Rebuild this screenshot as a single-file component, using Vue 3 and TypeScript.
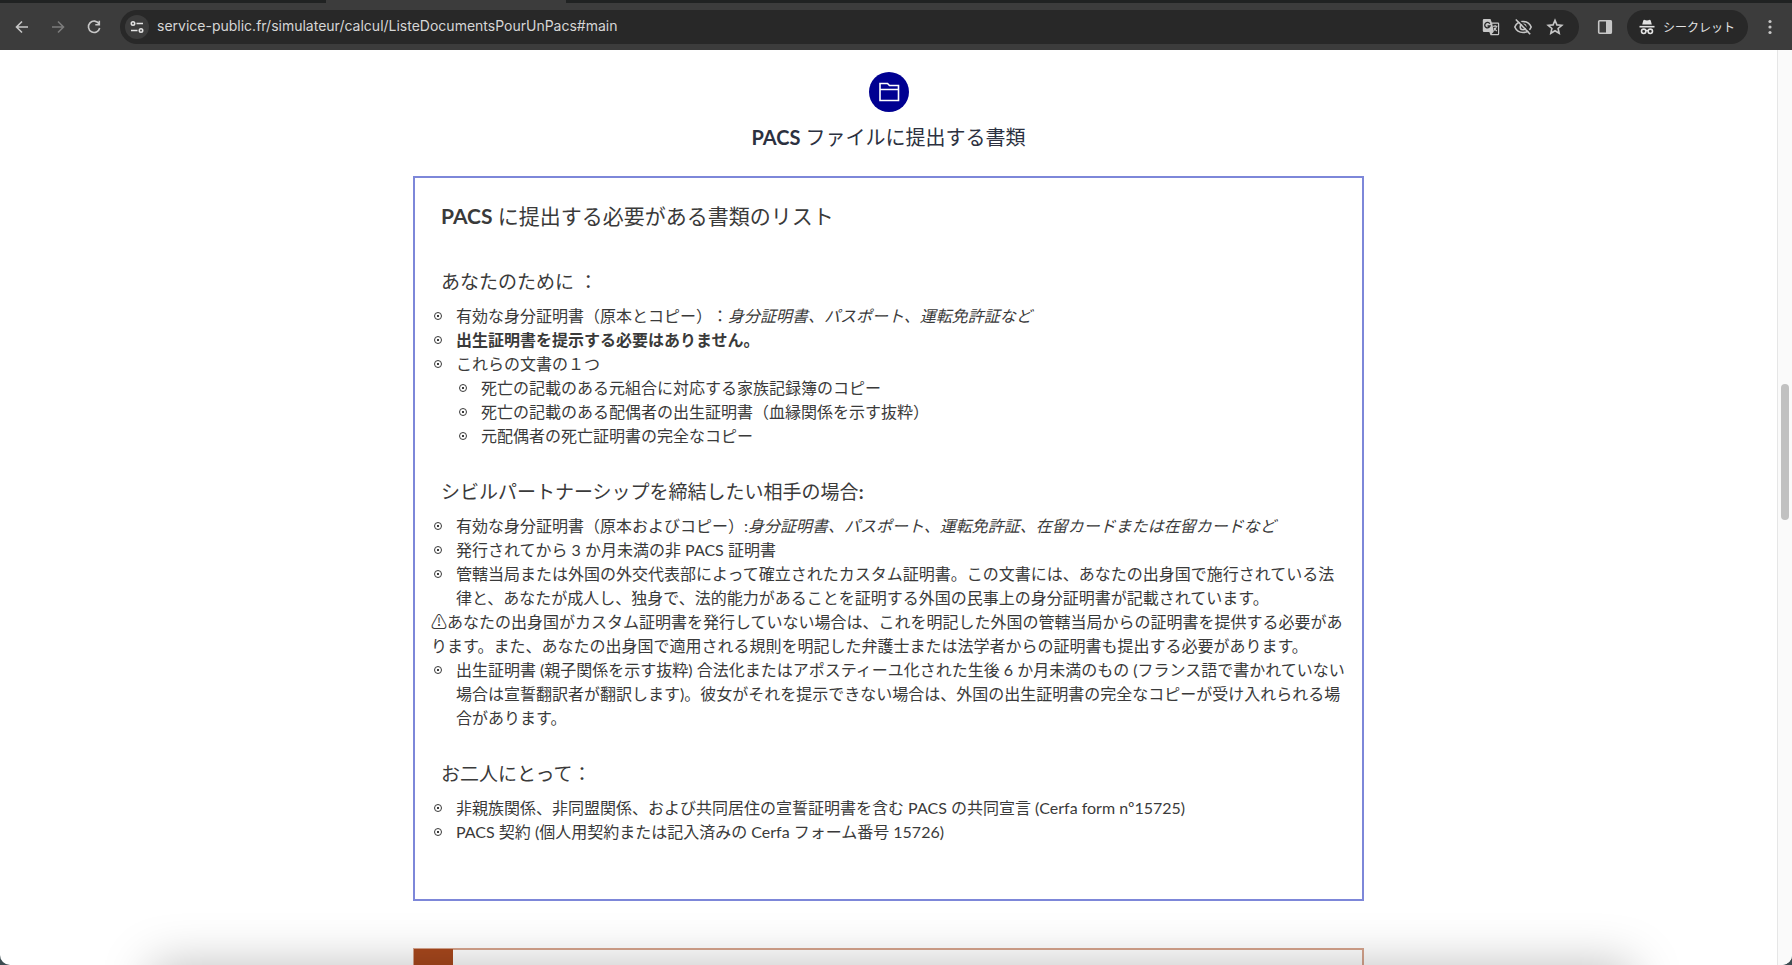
<script setup lang="ts">
import { ref } from 'vue'

interface Run {
  text: string
  style?: 'em' | 'strong'
}

interface Item {
  runs: Run[]
  note?: boolean
  children?: string[]
}

interface Section {
  title: string
  boldEnd?: string
  items: Item[]
}

const address = ref('service-public.fr/simulateur/calcul/ListeDocumentsPourUnPacs#main')

const sections: Section[] = [
  {
    title: 'あなたのために ：',
    items: [
      {
        runs: [
          { text: '有効な身分証明書（原本とコピー）：' },
          { text: '身分証明書、パスポート、運転免許証など', style: 'em' },
        ],
      },
      { runs: [{ text: '出生証明書を提示する必要はありません。', style: 'strong' }] },
      {
        runs: [{ text: 'これらの文書の１つ' }],
        children: [
          '死亡の記載のある元組合に対応する家族記録簿のコピー',
          '死亡の記載のある配偶者の出生証明書（血縁関係を示す抜粋）',
          '元配偶者の死亡証明書の完全なコピー',
        ],
      },
    ],
  },
  {
    title: 'シビルパートナーシップを締結したい相手の場合',
    boldEnd: ':',
    items: [
      {
        runs: [
          { text: '有効な身分証明書（原本およびコピー）:' },
          { text: '身分証明書、パスポート、運転免許証、在留カードまたは在留カードなど', style: 'em' },
        ],
      },
      { runs: [{ text: '発行されてから 3 か月未満の非 PACS 証明書' }] },
      {
        runs: [
          {
            text: '管轄当局または外国の外交代表部によって確立されたカスタム証明書。この文書には、あなたの出身国で施行されている法律と、あなたが成人し、独身で、法的能力があることを証明する外国の民事上の身分証明書が記載されています。',
          },
        ],
      },
      {
        note: true,
        runs: [
          {
            text: '⚠あなたの出身国がカスタム証明書を発行していない場合は、これを明記した外国の管轄当局からの証明書を提供する必要があります。また、あなたの出身国で適用される規則を明記した弁護士または法学者からの証明書も提出する必要があります。',
          },
        ],
      },
      {
        runs: [
          {
            text: '出生証明書 (親子関係を示す抜粋) 合法化またはアポスティーユ化された生後 6 か月未満のもの (フランス語で書かれていない場合は宣誓翻訳者が翻訳します)。彼女がそれを提示できない場合は、外国の出生証明書の完全なコピーが受け入れられる場合があります。',
          },
        ],
      },
    ],
  },
  {
    title: 'お二人にとって：',
    items: [
      {
        runs: [
          {
            text: '非親族関係、非同盟関係、および共同居住の宣誓証明書を含む PACS の共同宣言 (Cerfa form nº15725)',
          },
        ],
      },
      { runs: [{ text: 'PACS 契約 (個人用契約または記入済みの Cerfa フォーム番号 15726)' }] },
    ],
  },
]
</script>

<template>
  <div class="window" lang="ja">
    <div class="tabs"><span class="tab"></span></div>
    <header class="toolbar">
      <button class="icon-btn" type="button" aria-label="戻る">
        <svg width="20" height="20" viewBox="0 0 20 20"><path d="M16 10H4.800M10 4.500L4.500 10l5.500 5.500" /></svg>
      </button>
      <button class="icon-btn dim" type="button" aria-label="進む" disabled>
        <svg width="20" height="20" viewBox="0 0 20 20"><path d="M4 10h11.200M10 4.500l5.500 5.500-5.500 5.500" /></svg>
      </button>
      <button class="icon-btn" type="button" aria-label="再読み込み">
        <svg width="20" height="20" viewBox="0 0 20 20">
          <path d="M15 6.800A5.700 5.700 0 1 0 15.700 11M15.300 3.800V7.700H11.300" />
        </svg>
      </button>
      <div class="omnibox">
        <button class="site-btn" type="button" aria-label="サイト情報">
          <svg width="16" height="16" viewBox="0 0 16 16">
            <circle cx="4" cy="4.500" r="1.700" />
            <path d="M7.500 4.500H14M2 11.500h6.500" />
            <circle cx="12" cy="11.500" r="1.700" />
          </svg>
        </button>
        <input v-model="address" class="address" type="text" aria-label="アドレス" spellcheck="false" />
        <button class="icon-btn" type="button" aria-label="翻訳">
          <svg width="20" height="20" viewBox="0 0 20 20">
            <path class="fill" d="M3 2h6.500l1.300 3.500H17a1.200 1.200 0 0 1 1.200 1.200V17a1.200 1.200 0 0 1-1.200 1.200H9.500L8.300 15H3a1.200 1.200 0 0 1-1.200-1.200V3.200A1.200 1.200 0 0 1 3 2z" />
            <path class="hole" d="M11.300 6.700H17V17h-6.300l2-2.200z" />
            <path class="ink" d="M8.800 6.800A2.700 2.700 0 1 0 9 9H6.500" />
            <path class="thin" d="M11.800 9.200h4.700M14.100 8v1.200M15.600 9.200c-.4 2-1.600 3.500-3 4.500M12.900 10.800c.6 1.300 1.700 2.500 3 3.200" />
          </svg>
        </button>
        <button class="icon-btn" type="button" aria-label="サードパーティ Cookie をブロック">
          <svg width="20" height="20" viewBox="0 0 20 20">
            <path d="M1.800 10C3.300 6.500 6.400 4.500 10 4.500s6.700 2 8.200 5.500c-1.500 3.500-4.600 5.500-8.200 5.500S3.300 13.500 1.800 10z" />
            <circle cx="10" cy="10" r="2.800" />
            <path class="cut" d="M4.300 1.800l14 14" />
            <path d="M2.800 2.500l14.400 14.700" />
          </svg>
        </button>
        <button class="icon-btn" type="button" aria-label="ブックマーク">
          <svg width="20" height="20" viewBox="0 0 20 20">
            <path d="M10 3.300l1.900 4.600 4.900.4-3.700 3.200 1.100 4.800-4.200-2.500-4.200 2.500 1.100-4.800-3.700-3.200 4.900-.4z" />
          </svg>
        </button>
      </div>
      <button class="icon-btn panel-btn" type="button" aria-label="サイドパネル">
        <svg width="20" height="20" viewBox="0 0 20 20">
          <rect x="3.700" y="3.700" width="12.600" height="12.600" rx="1" />
          <path class="fill" d="M11 3.500h5.500v13H11z" />
        </svg>
      </button>
      <button class="incognito" type="button">
        <svg width="18" height="18" viewBox="0 0 18 18">
          <path class="fill" d="M5.200 2.700C5.500 1.900 6 1.700 6.700 1.900L9 2.500l2.300-.6c.7-.2 1.200 0 1.500.8L13.800 6.500H4.200z" />
          <path d="M1.500 8.700h15" />
          <circle cx="5.700" cy="13.300" r="2.200" />
          <circle cx="12.300" cy="13.300" r="2.200" />
          <path d="M7.700 12.900q1.300-.7 2.600 0" />
        </svg>
        <span>シークレット</span>
      </button>
      <button class="icon-btn" type="button" aria-label="メニュー">
        <svg width="20" height="20" viewBox="0 0 20 20">
          <circle class="dot" cx="10" cy="4.500" r="1.600" />
          <circle class="dot" cx="10" cy="10" r="1.600" />
          <circle class="dot" cx="10" cy="15.500" r="1.600" />
        </svg>
      </button>
    </header>

    <div class="viewport">
      <main class="page">
        <div class="badge">
          <svg width="24" height="24" viewBox="0 0 24 24">
            <path d="M3 20.500V3.500H10.500L12.500 5.500H21.500V20.500H2.200M3 9.500H21.500" />
          </svg>
        </div>
        <h1><b>PACS</b> ファイルに提出する書類</h1>
        <article class="card">
          <h2><b>PACS</b> に提出する必要がある書類のリスト</h2>
          <section v-for="section in sections" :key="section.title">
            <h3>{{ section.title }}<b v-if="section.boldEnd">{{ section.boldEnd }}</b></h3>
            <ul>
              <li v-for="(item, i) in section.items" :key="i" :class="{ note: item.note }">
                <div>
                  <component :is="run.style ?? 'span'" v-for="(run, j) in item.runs" :key="j">{{ run.text }}</component>
                  <ul v-if="item.children">
                    <li v-for="child in item.children" :key="child"><div>{{ child }}</div></li>
                  </ul>
                </div>
              </li>
            </ul>
          </section>
        </article>
        <article class="warning"><div class="flag"></div></article>
      </main>
      <div class="track"><div class="thumb"></div></div>
    </div>
    <div class="shade"></div>
  </div>
</template>

<style>
body {
  margin: 0;
  background: #3c4b50;
}
</style>

<style scoped>
.window {
  position: relative;
  display: flex;
  flex-direction: column;
  height: 100vh;
  overflow: hidden;
  border-radius: 0 0 10px 10px;
  background: #fff;
  color: #3a3a3a;
  font-family: Lato, "Noto Sans CJK JP", "DejaVu Sans", sans-serif;
  text-spacing-trim: space-all;
}

.tabs {
  flex: none;
  height: 3px;
  padding-left: 326px;
  background: #202222;
}

.tab {
  display: block;
  width: 240px;
  height: 3px;
  background: #3c3c3c;
}

.toolbar {
  flex: none;
  display: flex;
  align-items: center;
  box-sizing: border-box;
  height: 47px;
  padding: 0 8px;
  background: #3c3c3c;
}

button {
  display: flex;
  align-items: center;
  justify-content: center;
  padding: 0;
  border: 0;
  background: none;
  color: #c7c7c7;
  font: inherit;
}

svg {
  fill: none;
  stroke: currentColor;
  stroke-width: 1.6;
}

svg .fill,
svg .dot {
  fill: currentColor;
  stroke: none;
}

svg .hole {
  fill: #282828;
  stroke: none;
}

svg .ink {
  stroke: #282828;
  stroke-width: 1.3;
}

svg .thin {
  stroke-width: 1.1;
}

svg .cut {
  stroke: #282828;
}

.icon-btn {
  flex: none;
  width: 28px;
  height: 28px;
  margin-right: 8px;
}

.icon-btn:last-child {
  margin-right: 0;
}

.dim {
  color: #7c7c7c;
}

.omnibox {
  flex: 1;
  display: flex;
  align-items: center;
  box-sizing: border-box;
  height: 34px;
  margin-left: 4px;
  padding: 0 10px 0 5px;
  border-radius: 17px;
  background: #282828;
}

.omnibox .icon-btn {
  margin-right: 4px;
}

.omnibox .icon-btn:last-child {
  margin-right: 0;
}

.site-btn {
  flex: none;
  width: 24px;
  height: 24px;
  border-radius: 50%;
  background: #3c3c3c;
  color: #e3e3e3;
}

.address {
  flex: 1;
  min-width: 0;
  margin-left: 8px;
  padding: 0 0 2px;
  border: 0;
  outline: 0;
  background: none;
  color: #d6d6d6;
  font: 14px/20px Inter, "Noto Sans CJK JP", sans-serif;
}

.panel-btn {
  margin: 0 8px 0 12px;
}

.incognito {
  flex: none;
  gap: 7px;
  height: 34px;
  padding: 0 13px 0 11px;
  margin-right: 8px;
  border-radius: 17px;
  background: #282828;
  color: #e3e3e3;
  font-size: 12px;
}

.viewport {
  flex: 1;
  display: flex;
  min-height: 0;
}

.page {
  flex: 1;
  display: flex;
  flex-direction: column;
  align-items: center;
  padding-top: 22px;
  overflow: hidden;
}

.badge {
  flex: none;
  display: flex;
  align-items: center;
  justify-content: center;
  width: 40px;
  height: 40px;
  border-radius: 50%;
  background: #000091;
  color: #fff;
}

h1,
h2,
h3 {
  margin: 0;
  font-weight: 400;
}

h1 {
  margin: 11px 0 25px;
  color: #2c3140;
  font-size: 20px;
  line-height: 28px;
}

h2 {
  margin-bottom: 40px;
  padding-left: 10px;
  font-size: 21px;
  line-height: 28px;
}

h3 {
  margin-bottom: 10px;
  padding-left: 10px;
  font-size: 19px;
  line-height: 24px;
}

.card,
.warning {
  flex: none;
  box-sizing: border-box;
  width: 100%;
  max-width: 951px;
}

.card {
  padding: 24px 14px 55px 16px;
  border: 2px solid #7d87d9;
}

section + section {
  margin-top: 32px;
}

ul {
  margin: 0;
  padding: 0;
  list-style: none;
  font-size: 16px;
  line-height: 24px;
}

li {
  display: flex;
  gap: 14px;
  padding-left: 3px;
}

li::before {
  content: "";
  flex: none;
  box-sizing: border-box;
  width: 8px;
  height: 8px;
  margin-top: 8px;
  border: 1px solid #3a3a3a;
  border-radius: 50%;
  background: radial-gradient(circle, #3a3a3a 1px, transparent 1px);
}

li.note {
  padding-left: 0;
}

li.note::before {
  display: none;
}

.warning {
  margin-top: 47px;
  border: 2px solid #d6a48d;
}

.flag {
  width: 39px;
  height: 80px;
  margin: -1px 0 0 -1px;
  background: #a8481d;
}

.track {
  flex: none;
  display: flex;
  justify-content: center;
  box-sizing: border-box;
  width: 15px;
  border-left: 1px solid #e6e6e6;
  background: #fafafa;
}

.thumb {
  width: 8px;
  height: 136px;
  margin-top: 334px;
  border-radius: 4px;
  background: #c1c1c1;
}

/* Shadow cast on the window by the dock below it */
.shade {
  position: absolute;
  right: 160px;
  bottom: -60px;
  left: 152px;
  height: 60px;
  box-shadow: 0 0 50px rgba(0, 0, 0, 0.26);
  pointer-events: none;
}
</style>
